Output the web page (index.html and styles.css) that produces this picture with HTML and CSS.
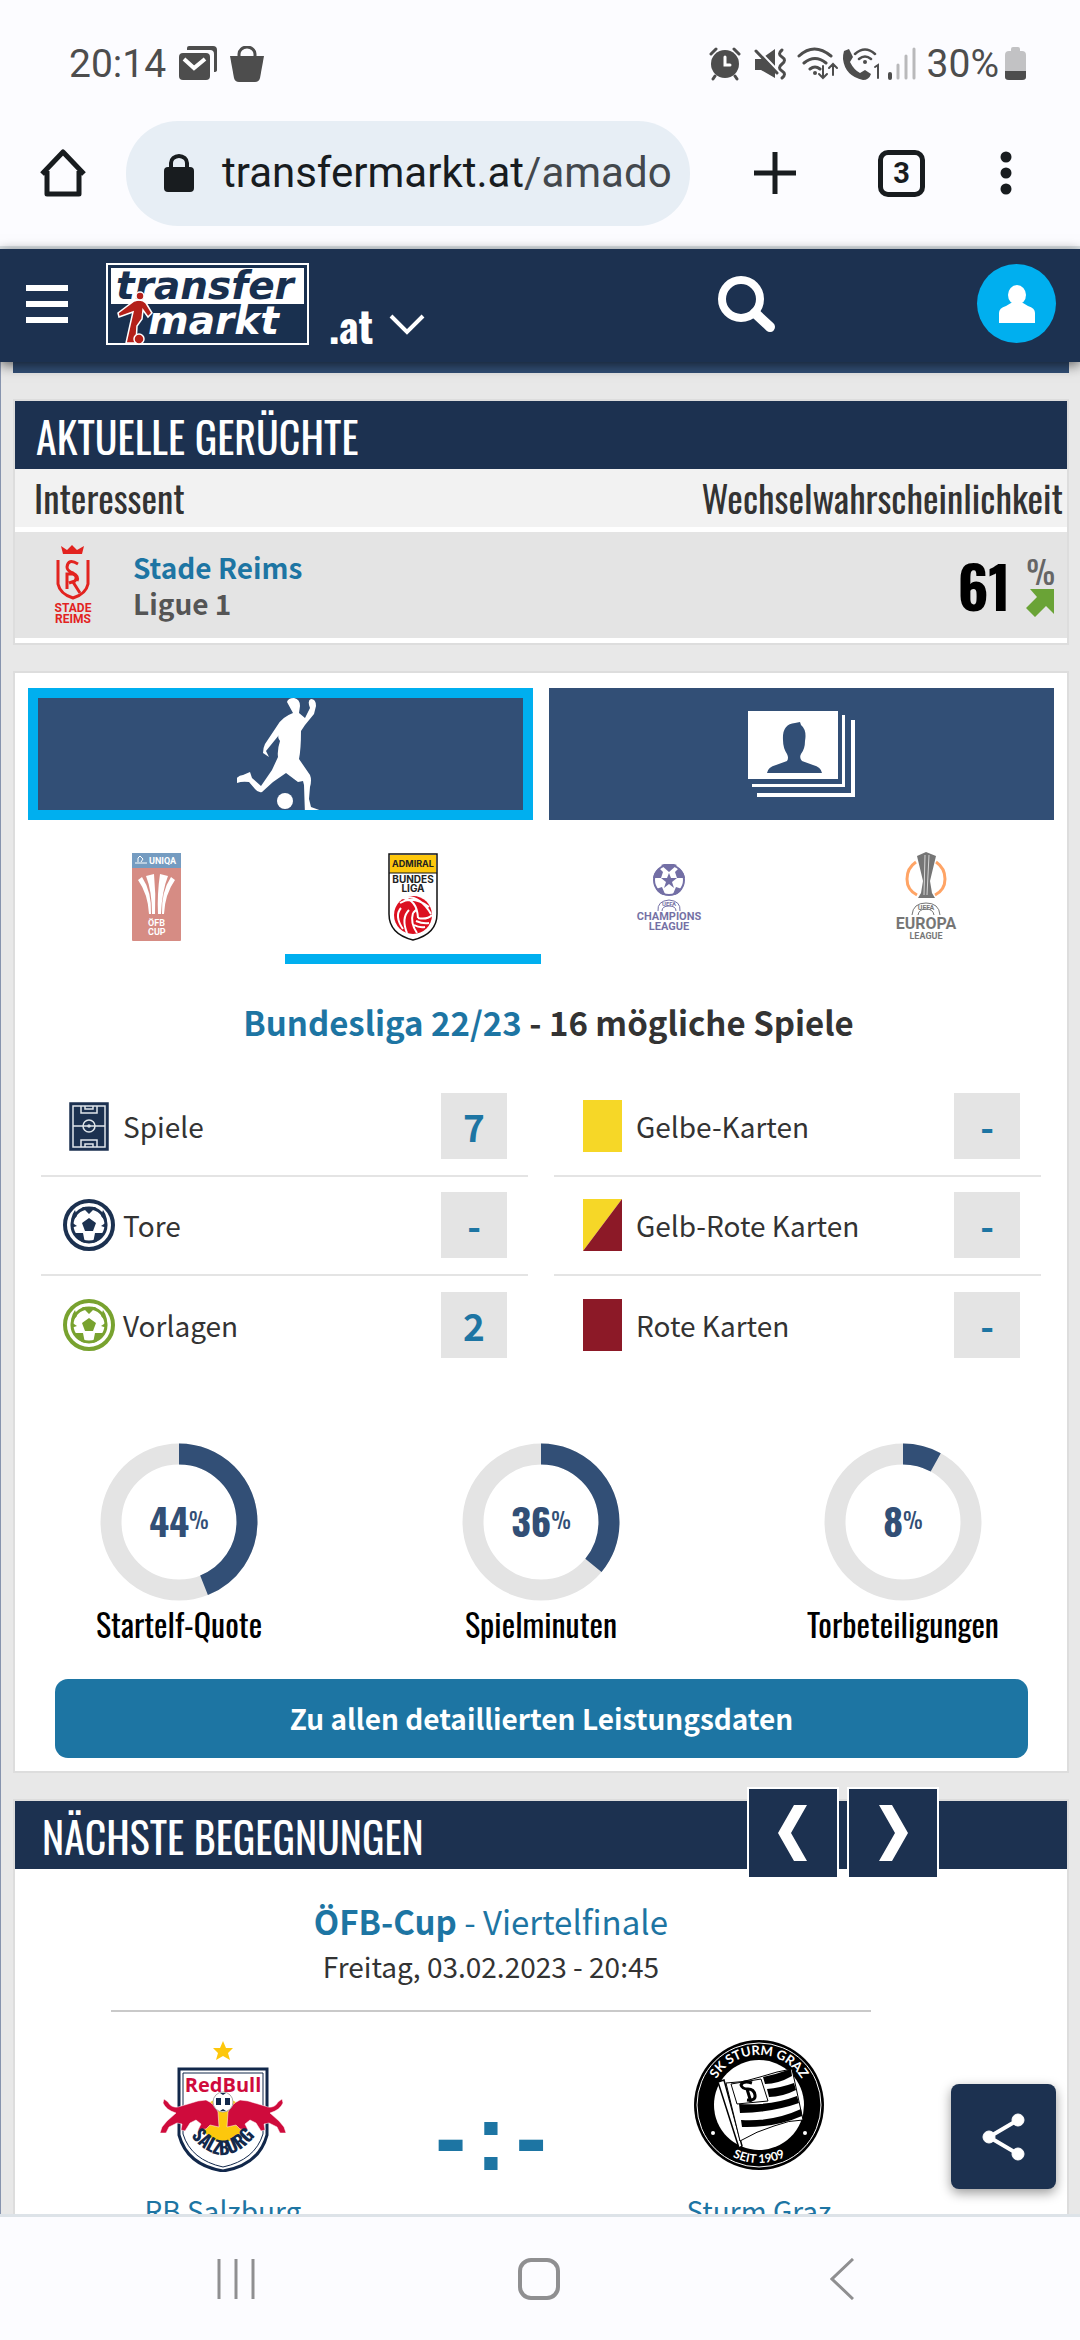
FILE: index.html
```html
<!DOCTYPE html>
<html lang="de">
<head>
  <meta charset="UTF-8">
  <meta name="viewport" content="width=device-width, initial-scale=1.0">
  <title>Transfermarkt</title>
  <link rel="stylesheet" href="styles.css">
</head>
<body>
  <!-- status bar -->
  <div class="statusbar">
    <div class="status-left">
      <span>20:14</span>
      <svg width="38" height="36" viewBox="0 0 38 36"><path d="M8 4V2q0-2 2-2h24q4 0 4 4v20q0 2-3 2V8q0-4-4-4z" fill="#4d4d4d"/><rect y="7" width="31" height="27" rx="4" fill="#4d4d4d"/><path d="M5 13l10 9 11-9" fill="none" stroke="#fff" stroke-width="4"/></svg>
      <svg width="34" height="36" viewBox="0 0 34 36"><path d="M9 12V8a8 7 0 0 1 16 0v4" fill="none" stroke="#4d4d4d" stroke-width="3"/><path d="M0 10h34l-4 22q-1 4-5 4H9q-4 0-5-4z" fill="#4d4d4d"/></svg>
    </div>
    <div class="status-right">
      <svg width="212" height="34" viewBox="0 0 212 34" fill="none" stroke="#4d4d4d" stroke-width="3" stroke-linecap="round">
        <circle cx="16" cy="17" r="14" fill="#4d4d4d" stroke="none"/>
        <path d="M2 7l5-5M25 2l5 5M6 29l-2 3M26 29l2 3"/>
        <path d="M16 10v8h5" stroke="#fff"/>
        <path d="M46 12h6l14-10v29L52 23h-6z" fill="#4d4d4d" stroke="none"/>
        <path d="M48 3l21 22" stroke="#fcfcff" stroke-width="4"/>
        <path d="M47 4l21 22"/>
        <path d="M73 3q-5 4 0 7t0 7 0 7 0 7"/>
        <path d="M90 9q15-14 32 0M95 16q11-9 22 0M101 22q5-4 10 0"/>
        <circle cx="106" cy="26" r="2" fill="#4d4d4d" stroke="none"/>
        <path d="M114 19v12M110 27l4 4 4-4M124 28V18M120 21l4-4 4 4" stroke-width="2"/>
        <path d="M135 4l5-2 4 8-3 5q4 8 10 11l5-3 6 4q-2 6-8 6-18-4-20-21 0-5 1-8z" fill="#4d4d4d" stroke="none"/>
        <path d="M146 7q10-9 20 0M150 12q6-5 12 0" stroke-width="2.500"/>
        <circle cx="156" cy="15" r="2" fill="#4d4d4d" stroke="none"/>
        <path d="M166 20l3-2v13" stroke-width="2"/>
        <path d="M181 27v4" stroke-width="4"/>
        <path d="M189 18v13M197 9v22M205 2v29" stroke="#b9b9bb"/>
      </svg>
      <span>30%</span>
      <svg width="21" height="34" viewBox="0 0 21 34"><path d="M6 4V2q0-2 2-2h5q2 0 2 2v2h2q4 0 4 4v22q0 3-4 3H4q-4 0-4-3V8q0-4 4-4z" fill="#c2c2c4"/><path d="M0 24h21v6q0 3-4 3H4q-4 0-4-3z" fill="#4d4d4d"/></svg>
    </div>
  </div>

  <!-- browser toolbar -->
  <div class="toolbar">
    <button class="tool-btn" aria-label="Startseite">
      <svg width="48" height="50" viewBox="0 0 48 50" fill="none" stroke="#181c1f" stroke-width="5"><path d="M3 26L24 4l21 22M8 23v23h32V23" stroke-linejoin="round"/></svg>
    </button>
    <div class="url">
      <svg width="30" height="38" viewBox="0 0 30 38"><rect y="13" width="30" height="25" rx="4" fill="#181c1f"/><path d="M7 14V9a8 7 0 0 1 16 0v5" fill="none" stroke="#181c1f" stroke-width="4"/></svg>
      <span>transfermarkt.at<span class="path">/amado</span></span>
    </div>
    <button class="tool-btn plus" aria-label="Neuer Tab">
      <svg width="42" height="42" viewBox="0 0 42 42" stroke="#181c1f" stroke-width="5"><path d="M0 21h42M21 0v42"/></svg>
    </button>
    <button class="tabs-btn">3</button>
    <button class="tool-btn dots" aria-label="Menü">
      <svg width="12" height="44" viewBox="0 0 12 44" fill="#181c1f"><circle cx="6" cy="6" r="5.500"/><circle cx="6" cy="22" r="5.500"/><circle cx="6" cy="38" r="5.500"/></svg>
    </button>
  </div>

  <!-- page header -->
  <header class="header">
    <button class="burger" aria-label="Navigation"><i></i><i></i><i></i></button>
    <a class="logo" href="#">
      <svg width="203" height="82" viewBox="0 0 203 82">
        <rect x="1" y="1" width="201" height="80" fill="#19304f" stroke="#fff" stroke-width="2"/>
        <rect x="5" y="5" width="193" height="36" fill="#fff"/>
        <text x="10" y="36" font-family="DejaVu Sans" font-weight="bold" font-style="italic" font-size="39" fill="#19304f">transfer</text>
        <text x="42" y="71" font-family="DejaVu Sans" font-weight="bold" font-style="italic" font-size="39" fill="#fff">markt</text>
        <g fill="#b42019" stroke="#fff" stroke-width="1.500"><path d="M28 38q8-3 12 2l6 10-4 4-5-7-1 9-5 7-1 17h-10l4-18 3-13-14 5-1-4z"/><circle cx="34" cy="33" r="4"/><circle cx="33" cy="76" r="5"/></g>
      </svg>
    </a>
    <button class="country">.at
      <svg width="36" height="22" viewBox="0 0 36 22" fill="none" stroke="#fff" stroke-width="4"><path d="M2 2l16 16L34 2"/></svg>
    </button>
    <button class="search" aria-label="Suche">
      <svg width="58" height="56" viewBox="0 0 58 56" fill="none" stroke="#fff"><circle cx="24" cy="23" r="19" stroke-width="8"/><path d="M38 37l15 14" stroke-width="10" stroke-linecap="round"/></svg>
    </button>
    <a class="user" href="#" aria-label="Profil">
      <svg width="36" height="38" viewBox="0 0 36 38" fill="#fff"><ellipse cx="18" cy="10" rx="9" ry="10"/><path d="M0 38V28q0-5 7-7l5-3h12l5 3q7 2 7 7v10z"/></svg>
    </a>
  </header>

  <main class="page">
    <div class="strip"></div>

    <section class="box">
      <h2 class="head">AKTUELLE GERÜCHTE</h2>
      <table class="rumours">
        <tr><th>Interessent</th><th class="right">Wechselwahrscheinlichkeit</th></tr>
        <tr class="line">
          <td>
            <div class="club">
              <svg width="42" height="80" viewBox="0 0 42 80" fill="none" stroke="#e2231f">
                <path d="M11 9L9 1l6 4 5-5 5 5 7-4-2 8z" fill="#e2231f" stroke="none"/>
                <path d="M6 15v24q2 10 15 14 13-4 15-14V15" stroke-width="3"/>
                <path d="M26 19q-10-6-11 3 0 4 6 6 6 3 4 8M15 44V29h6q5 2 2 7l-6 2M21 37l7 11" stroke-width="3"/>
                <g fill="#e2231f" stroke="none" font-family="Roboto" font-size="12" text-anchor="middle"><text x="21" y="67">STADE</text><text x="21" y="78" font-weight="bold">REIMS</text></g>
              </svg>
              <div><a href="#">Stade Reims</a><br>Ligue 1</div>
            </div>
          </td>
          <td>
            <div class="chance">
              <b>61</b>
              <div class="trend">%<svg width="28" height="28" viewBox="0 0 28 28"><path d="M4 0h24v25l-8-8-11 11-9-9 11-11z" fill="#6aa336"/></svg></div>
            </div>
          </td>
        </tr>
      </table>
    </section>

    <section class="box">
      <div class="tiles">
        <button class="tile active" aria-label="Leistungsdaten">
          <svg width="88" height="112" viewBox="0 0 88 112" fill="#fff"><path d="M50 4q1-4 7-4 6 1 6 8l-1 7 6 5 5-10q-3-8 1-9 5 0 5 7l-2 8-9 11-4 6q0 18-2 28l11 16q2 5 0 12l-1 12 2 8 11 4q3 1 2 4H68l-1-30-1-4-5 1-12-9-13 9-11 10q-4 1-7-3l-6-7q-7-1-12 1l-1-4q3-4 7-4l7-3 2 6 9 8 11-16 6-13q-1-7 2-16-3-4-1-6l-13 16 3 6-6-4q0-5 2-9l12-18q5-9 16-13z"/><circle cx="48" cy="103" r="8"/></svg>
        </button>
        <button class="tile" aria-label="Kader">
          <svg width="108" height="86" viewBox="0 0 108 86" fill="#fff"><path d="M0 0h90v68H0zM94 4h3v72H4v-3h90zM103 9h4v77H9v-4h94z"/><path d="M19 62q1-6 9-8l11-4q2-3 0-7-4-6-4-14-1-16 12-17l5-1 1 3q6 5 4 16 0 8-4 13-2 4 1 7l11 4q8 2 9 8z" fill="#324f76"/></svg>
        </button>
      </div>

      <nav class="comps">
        <a class="faded" href="#" aria-label="ÖFB-Cup">
          <svg width="49" height="88" viewBox="0 0 49 88"><rect width="49" height="88" rx="1" fill="#bb4034"/><rect width="49" height="15" fill="#1a5c98"/><path d="M3 10h12M6 9q-1-5 2-6l3 3-2 3" stroke="#fff" fill="none"/><g fill="#fff" font-family="Roboto" font-weight="bold" font-size="9"><text x="17" y="11">UNIQA</text><text x="16" y="73">ÖFB</text><text x="16" y="82">CUP</text></g><path d="M6 27l4-3q10 15 9 37h-2Q16 41 6 27zM14 23l8-2q2 20 1 40h-3q0-23-6-38zM28 21l8 2q-6 15-7 38h-3q-1-20 2-40zM39 24l4 3Q33 41 32 61h-2q-1-22 9-37z" fill="#fff"/></svg>
        </a>
        <a class="current" href="#" aria-label="Bundesliga">
          <svg width="50" height="88" viewBox="0 0 50 88"><path d="M1 1h48v60q0 20-24 26Q1 81 1 61z" fill="#fff" stroke="#111" stroke-width="1.500"/><path d="M2 2h46v18H2z" fill="#fdc70c"/><path d="M1 20h48" stroke="#111"/><g fill="#222" font-family="Inter" font-weight="bold" text-anchor="middle"><text x="25" y="14" font-size="9">ADMIRAL</text><text x="25" y="30" font-size="10">BUNDES</text><text x="25" y="39" font-size="10">LIGA</text></g><circle cx="25" cy="62" r="19" fill="#dc1020"/><path d="M12 50q13-8 29 4M14 45q15 1 16 20M17 44q16-1 26 17M30 65q9 2 14-3M28 68q7 3 13 2M26 72q5 3 11 2M21 57q-8 8-2 23M13 55q-7 8 2 21M25 60l3-3M25 60q-3 10 4 20" stroke="#fff" stroke-width="2" fill="none"/></svg>
        </a>
        <a class="faded" href="#" aria-label="Champions League">
          <svg width="70" height="68" viewBox="0 0 70 68" fill="#17116b"><circle cx="35" cy="17" r="15" fill="none" stroke="#17116b" stroke-width="2"/><path d="M35 10l2 5h6l-5 4 2 6-5-4-5 4 2-6-5-4h6zM27 2l8 7 8-7-3-1H30zM19 15l8 0 2-6-4-4q-5 4-6 10zM51 15l-8 0-2-6 4-4q5 4 6 10zM22 26l6-2 3 7-2 1q-5-2-7-6zM48 26l-6-2-3 7 2 1q5-2 7-6z"/><path d="M24 48q-1-10 11-11 12 1 11 11M28 48q0-5 7-5t7 5" fill="none" stroke="#17116b"/><g font-family="Roboto" font-weight="bold" text-anchor="middle"><text x="35" y="43" font-size="6">UEFA</text><text x="35" y="57" font-size="11">CHAMPIONS</text><text x="35" y="67" font-size="11">LEAGUE</text></g></svg>
        </a>
        <a class="faded" href="#" aria-label="Europa League">
          <svg width="64" height="90" viewBox="0 0 64 90" fill="#1b1b1b"><path d="M22 10q-9 6-9 17t10 16M42 10q9 6 9 17T41 43" fill="none" stroke="#ff6900" stroke-width="3"/><path d="M23 4l9-4 10 4-6 25 2 12 3 5H24l3-5 2-12z"/><path d="M31 3l-1 40M35 3l-2 40" stroke="#bbb"/><path d="M18 63q1-12 14-12t14 12M24 63q1-6 8-6t8 6" fill="none" stroke="#1b1b1b"/><g font-family="Roboto" font-weight="bold" text-anchor="middle"><text x="32" y="58" font-size="7">UEFA</text><text x="32" y="77" font-size="16">EUROPA</text><text x="32" y="87" font-size="9">LEAGUE</text></g></svg>
        </a>
      </nav>

      <h3 class="season"><a href="#">Bundesliga 22/23</a> - 16 mögliche Spiele</h3>

      <div class="stats">
        <dl>
          <div class="stat">
            <dt><svg width="54" height="54" viewBox="0 0 54 54" fill="none" stroke="#dfe5ea" stroke-width="1.500"><rect x="8" y="4" width="38" height="47" fill="#1c3150" stroke="#1c3150"/><rect x="11" y="7" width="32" height="41"/><path d="M11 27h32M19 7v7h16V7M19 48v-7h16v7M23 7v3h8V7M23 48v-3h8v3"/><circle cx="27" cy="27" r="6"/><circle cx="27" cy="27" r="1"/></svg>Spiele</dt>
            <dd>7</dd>
          </div>
          <div class="stat">
            <dt><svg class="ball" width="54" height="54" viewBox="0 0 54 54"><circle cx="27" cy="27" r="24" fill="#fff" stroke="currentColor" stroke-width="4"/><circle cx="27" cy="27" r="17" fill="#fff" stroke="currentColor" stroke-width="3"/><path d="M27 20l7 5-3 8h-8l-3-8zM20 9h14l-7 7zM9 24l6-6-2-6Q8 19 9 30l6-2zM45 24l-6-6 2-6q5 7 4 18l-6-2zM13 35h8l2 10q-7-2-10-10zM41 35h-8l-2 10q7-2 10-10z" fill="currentColor"/></svg>Tore</dt>
            <dd>-</dd>
          </div>
          <div class="stat">
            <dt><svg class="ball green" width="54" height="54" viewBox="0 0 54 54"><circle cx="27" cy="27" r="24" fill="#fff" stroke="currentColor" stroke-width="4"/><circle cx="27" cy="27" r="17" fill="#fff" stroke="currentColor" stroke-width="3"/><path d="M27 20l7 5-3 8h-8l-3-8zM20 9h14l-7 7zM9 24l6-6-2-6Q8 19 9 30l6-2zM45 24l-6-6 2-6q5 7 4 18l-6-2zM13 35h8l2 10q-7-2-10-10zM41 35h-8l-2 10q7-2 10-10z" fill="currentColor"/></svg>Vorlagen</dt>
            <dd>2</dd>
          </div>
        </dl>
        <dl>
          <div class="stat">
            <dt><svg width="54" height="54" viewBox="0 0 54 54"><rect x="8" y="1" width="39" height="52" fill="#f6d727"/></svg>Gelbe-Karten</dt>
            <dd>-</dd>
          </div>
          <div class="stat">
            <dt><svg width="54" height="54" viewBox="0 0 54 54"><path d="M8 1h39L8 53z" fill="#f6d727"/><path d="M47 1v52H8z" fill="#8c1927"/></svg>Gelb-Rote Karten</dt>
            <dd>-</dd>
          </div>
          <div class="stat">
            <dt><svg width="54" height="54" viewBox="0 0 54 54"><rect x="8" y="1" width="39" height="52" fill="#8c1927"/></svg>Rote Karten</dt>
            <dd>-</dd>
          </div>
        </dl>
      </div>

      <div class="quotes">
        <div class="quote">
          <div class="ring">
            <svg viewBox="0 0 158 158"><circle cx="79" cy="79" r="68"/><circle class="val" cx="79" cy="79" r="68" pathLength="100" stroke-dasharray="44 100"/></svg>
            <p><b>44</b><span>%</span></p>
          </div>
          Startelf-Quote
        </div>
        <div class="quote">
          <div class="ring">
            <svg viewBox="0 0 158 158"><circle cx="79" cy="79" r="68"/><circle class="val" cx="79" cy="79" r="68" pathLength="100" stroke-dasharray="36 100"/></svg>
            <p><b>36</b><span>%</span></p>
          </div>
          Spielminuten
        </div>
        <div class="quote">
          <div class="ring">
            <svg viewBox="0 0 158 158"><circle cx="79" cy="79" r="68"/><circle class="val" cx="79" cy="79" r="68" pathLength="100" stroke-dasharray="8 100"/></svg>
            <p><b>8</b><span>%</span></p>
          </div>
          Torbeteiligungen
        </div>
      </div>

      <a class="more" href="#">Zu allen detaillierten Leistungsdaten</a>
    </section>

    <section class="box">
      <h2 class="head next">NÄCHSTE BEGEGNUNGEN</h2>
      <div class="arrows">
        <button aria-label="Zurück"><svg width="30" height="56" viewBox="0 0 30 56" fill="#fff"><path d="M16 0h13L13 28l16 28H16L0 28z"/></svg></button>
        <button aria-label="Weiter"><svg width="30" height="56" viewBox="0 0 30 56" fill="#fff"><path d="M14 0H1l16 28L1 56h13l16-28z"/></svg></button>
      </div>
      <div class="match">
        <p class="round"><a href="#"><b>ÖFB-Cup</b> - Viertelfinale</a></p>
        <p class="date">Freitag, 03.02.2023 - 20:45</p>
        <hr>
        <div class="teams">
          <div class="team">
            <svg width="132" height="134" viewBox="0 0 132 134">
              <path d="M66 3l3 7h7l-5 5 2 7-7-4-7 4 2-7-5-5h7z" fill="#fdc70c"/>
              <path d="M22 31h88v66q-8 30-44 36-36-6-44-36z" fill="#fff" stroke="#12284b" stroke-width="3"/>
              <path d="M26 35h80v61q-8 26-40 33-32-7-40-33z" fill="#fff" stroke="#12284b"/>
              <circle cx="66" cy="82" r="22" fill="#fdc70c"/>
              <path id="rbull" d="M62 89l-9-2-4 4-8 1 3-6-5-4-6 3-5 8-4-1 1-6-5-1-8 4-3 6h-6l2-6 5-6 9-8q-10-3-13-10l1-4 4 3q3 6 10 5l20-6 8-1q9 4 12 12z" fill="#cf0b3c" stroke="#fff" stroke-width=".5"/>
              <use href="#rbull" transform="translate(132 0) scale(-1 1)"/>
              <text x="66" y="54" font-family="Open Sans" font-weight="bold" font-size="20" text-anchor="middle" fill="#cf0b3c">RedBull</text>
              <circle cx="66" cy="64" r="10" fill="#fff" stroke="#aaa"/><path d="M59 60h5v7h-5zM68 60h5v7h-5zM63 55h6l-3 2zM63 73l3-2 3 2z" fill="#12284b"/>
              <path id="rbarc" d="M29 92Q66 142 103 92" fill="none"/>
              <text font-family="Oswald" font-weight="bold" font-size="18" fill="#12284b" text-anchor="middle"><textPath href="#rbarc" startOffset="50%">SALZBURG</textPath></text>
            </svg>
            <a href="#">RB Salzburg</a>
          </div>
          <div class="score"><span>-</span><span>:</span><span>-</span></div>
          <div class="team">
            <svg width="132" height="134" viewBox="0 0 132 134">
              <circle cx="66" cy="67" r="65" fill="#000"/><circle cx="66" cy="67" r="62" fill="none" stroke="#fff"/><circle cx="66" cy="67" r="45" fill="#fff"/>
              <path d="M25 44l6-2 18 66-3 2z" fill="#fff" stroke="#000" stroke-width="1.500"/>
              <path d="M33 45q18 0 34-6 18-6 32-8l11 51q-14 0-29 6-17 5-34 15z" fill="#fff" stroke="#000"/>
              <path d="M70 39q14-3 28-8l1 7q-14 8-27 8zM74 51q13-1 27-6l2 7q-14 7-27 7zM46 66q32 2 58-8l2 7q-25 9-59 10zM48 82q32 2 60-11l1 7q-28 12-60 11z"/>
              <path d="M38 46l30-5 7 22-31 3z" fill="#fff" stroke="#000"/><path d="M59 45q-9-3-11 2 1 4 7 4t7 6-8 5M54 51l4 13" fill="none" stroke="#000" stroke-width="3"/>
              <path id="sktop" d="M16 67a50 50 0 0 1 100 0" fill="none"/><path id="skbot" d="M8 67a58 58 0 0 0 116 0" fill="none"/>
              <g fill="#fff" font-family="Lato" font-weight="bold" text-anchor="middle"><text font-size="13"><textPath href="#sktop" startOffset="50%">SK STURM GRAZ</textPath></text><text font-size="12"><textPath href="#skbot" startOffset="50%">SEIT 1909</textPath></text></g>
              <circle cx="20" cy="95" r="2" fill="#fff"/><circle cx="112" cy="95" r="2" fill="#fff"/>
            </svg>
            <a href="#">Sturm Graz</a>
          </div>
        </div>
      </div>
    </section>

    <button class="share" aria-label="Teilen">
      <svg width="44" height="50" viewBox="0 0 44 50" fill="#fff" stroke="#fff"><circle cx="7" cy="25" r="6"/><circle cx="36" cy="8" r="6"/><circle cx="36" cy="42" r="6"/><path d="M36 8L7 25l29 17" fill="none" stroke-width="4"/></svg>
    </button>
  </main>

  <!-- system navigation -->
  <nav class="sysnav">
    <button aria-label="Letzte Apps"><svg width="40" height="42" viewBox="0 0 40 42" stroke="#8f8f91" stroke-width="3"><path d="M3 1v40M20 1v40M37 1v40"/></svg></button>
    <button aria-label="Home"><svg width="42" height="42" viewBox="0 0 42 42" fill="none" stroke="#8f8f91" stroke-width="4"><rect x="2" y="2" width="38" height="38" rx="11"/></svg></button>
    <button aria-label="Zurück"><svg width="24" height="42" viewBox="0 0 24 42" fill="none" stroke="#8f8f91" stroke-width="3"><path d="M23 1L2 21l21 20"/></svg></button>
  </nav>
</body>
</html>
```
FILE: styles.css
```css
* {
  margin: 0;
  padding: 0;
  box-sizing: border-box;
}
body {
  display: flex;
  flex-direction: column;
  height: 100vh;
  background-color: #fcfcff;
  font: 28px/36px "Source Sans Pro", "Noto Sans CJK SC", sans-serif;
  color: #333;
}
a {
  color: #1d75a3;
  text-decoration: none;
}
button {
  border: 0;
  background: none;
  font: inherit;
  color: inherit;
}
svg {
  display: block;
  flex: none;
}

/* status bar */
.statusbar {
  display: flex;
  justify-content: space-between;
  align-items: center;
  height: 120px;
  padding: 8px 54px 0 69px;
  font: 39px/44px Roboto, sans-serif;
  color: #4d4d4d;
}
.status-left,
.status-right {
  display: flex;
  align-items: center;
  gap: 13px;
}
.status-right {
  gap: 6px;
}

/* browser toolbar */
.toolbar {
  display: flex;
  align-items: center;
  height: 129px;
  padding: 0 68px 20px 39px;
  border-bottom: 3px solid #dfe5e9;
}
.url {
  display: flex;
  align-items: center;
  flex: 1;
  gap: 28px;
  height: 105px;
  margin: 0 64px 0 39px;
  padding-left: 38px;
  border-radius: 52px;
  background-color: #e7eef5;
  font: 42px/48px Roboto, sans-serif;
  color: #181c1f;
  white-space: nowrap;
  overflow: hidden;
}
.url .path {
  color: #43484d;
}
.tabs-btn {
  width: 47px;
  height: 47px;
  margin: 0 75px 0 82px;
  border: 5px solid #181c1f;
  border-radius: 10px;
  font: bold 29px/36px Roboto, sans-serif;
  color: #181c1f;
}

/* page header */
.header {
  position: relative;
  z-index: 2;
  display: flex;
  align-items: center;
  height: 113px;
  flex: none;
  padding: 0 24px 4px 26px;
  background-color: #1c3150;
  box-shadow: 0 3px 12px rgba(0,0,0,0.6);
}
.burger {
  display: grid;
  gap: 10px;
  width: 42px;
}
.burger i {
  height: 6px;
  background-color: #fff;
}
.logo {
  margin: 0 20px 0 38px;
}
.country {
  display: flex;
  align-items: center;
  gap: 16px;
  padding-top: 42px;
  font: bold 42px/44px "Oswald", "Roboto Condensed", "Liberation Sans Narrow", sans-serif;
  color: #fff;
}
.search {
  margin-left: auto;
}
.user {
  display: grid;
  place-items: center;
  width: 79px;
  height: 79px;
  margin-left: 202px;
  border-radius: 50%;
  background-color: #00afef;
}

/* content */
.page {
  position: relative;
  flex: 1;
  min-height: 0;
  padding: 0 11px 0 12px;
  border-left: 1px solid #8794ae;
  background-color: #e8e8e8;
  overflow: hidden;
}
.strip {
  height: 11px;
  background-color: #324f76;
}
.box {
  position: relative;
  margin-top: 26px;
  border: 2px solid #ddd;
  background-color: #fff;
}
.head {
  height: 68px;
  padding-left: 21px;
  background-color: #1c3150;
  font: 42px/70px "Oswald", "Roboto Condensed", "Liberation Sans Narrow", sans-serif;
  color: #fff;
}
.head.next {
  padding-left: 27px;
}

/* rumours */
.rumours {
  width: 100%;
  margin-bottom: 5px;
  border-collapse: collapse;
}
.rumours th {
  height: 58px;
  padding: 0 6px 0 19px;
  background-color: #f2f2f2;
  font: 37px/58px "Oswald", "Roboto Condensed", "Liberation Sans Narrow", sans-serif;
  text-align: left;
}
.rumours th.right {
  padding-right: 4px;
  text-align: right;
}
.rumours .line {
  height: 108px;
  border-top: 5px solid #fff;
  background-color: #e4e4e4;
}
.club {
  display: flex;
  align-items: center;
  gap: 39px;
  padding-left: 37px;
  font-weight: bold;
  color: #555;
}
.chance {
  display: flex;
  justify-content: flex-end;
  align-items: center;
  gap: 16px;
  padding-right: 12px;
}
.chance b {
  font: bold 58px/64px "Oswald", "Roboto Condensed", "Liberation Sans Narrow", sans-serif;
  color: #000;
}
.trend {
  font: 32px/36px "Oswald", "Roboto Condensed", "Liberation Sans Narrow", sans-serif;
  color: #666;
}

/* performance */
.tiles {
  display: grid;
  grid-template-columns: 1fr 1fr;
  gap: 16px;
  padding: 15px 13px 0;
}
.tile {
  display: grid;
  place-items: center;
  height: 132px;
  background-color: #324f76;
}
.tile.active {
  border: 10px solid #00afef;
}
.comps {
  display: grid;
  grid-template-columns: repeat(4, 1fr);
  padding: 20px 13px 0;
}
.comps a {
  display: grid;
  place-items: center;
  height: 124px;
  border-bottom: 10px solid transparent;
}
.comps .current {
  border-color: #00afef;
}
.comps .faded svg {
  opacity: 0.6;
}
.season {
  padding: 36px 0 0 15px;
  font-size: 33px;
  line-height: 44px;
  text-align: center;
}
.stats {
  display: grid;
  grid-template-columns: 1fr 1fr;
  gap: 26px;
  padding: 34px 26px 0;
}
.stat {
  display: flex;
  justify-content: space-between;
  align-items: center;
  height: 99px;
  padding: 0 21px;
  border-bottom: 2px solid #e4e4e4;
}
.stat:last-child {
  border-bottom: 0;
}
.stat dt {
  display: flex;
  align-items: center;
  gap: 7px;
}
.stat dd {
  width: 66px;
  height: 66px;
  background-color: #e4e4e4;
  font-weight: bold;
  font-size: 37px;
  line-height: 66px;
  text-align: center;
  color: #1d75a3;
}
.ball {
  color: #1c3150;
}
.ball.green {
  color: #78a22f;
}
.quotes {
  display: grid;
  grid-template-columns: repeat(3, 1fr);
  justify-items: center;
  margin: 68px -17px 0;
}
.quote {
  font: 32px/46px "Oswald", "Roboto Condensed", "Liberation Sans Narrow", sans-serif;
  text-align: center;
  color: #000;
}
.ring {
  display: grid;
  place-items: center;
}
.ring svg,
.ring p {
  grid-area: 1 / 1;
}
.ring svg {
  width: 158px;
  transform: rotate(-90deg);
  fill: none;
  stroke: #e4e4e4;
  stroke-width: 21;
}
.ring .val {
  stroke: #324f76;
}
.ring p {
  color: #324f76;
}
.ring b {
  font-size: 38px;
}
.ring span {
  font-size: 22px;
  line-height: 22px;
  vertical-align: 8px;
}
.more {
  display: block;
  margin: 32px 39px 13px 40px;
  border-radius: 13px;
  background-color: #1d75a3;
  font-weight: bold;
  line-height: 79px;
  text-align: center;
  color: #fff;
}

/* next matches */
.arrows {
  position: absolute;
  top: -14px;
  right: 128px;
  display: flex;
  gap: 8px;
}
.arrows button {
  display: grid;
  place-items: center;
  width: 92px;
  height: 92px;
  border: 2px solid #fff;
  background-color: #1c3150;
}
.match {
  width: 90%;
  padding: 28px 0 0 5px;
  text-align: center;
}
.round {
  font-size: 33px;
  line-height: 48px;
}
.date {
  line-height: 42px;
}
.match hr {
  margin: 23px 91px 26px;
  border: 0;
  border-top: 2px solid #c9c9c9;
}
.teams {
  display: flex;
  justify-content: center;
  gap: 48px;
}
.team {
  display: grid;
  justify-items: center;
  align-content: start;
  gap: 20px;
  width: 200px;
}
.score {
  display: flex;
  justify-content: center;
  gap: 9px;
  width: 240px;
  padding-top: 50px;
  font: bold 94px/100px "Liberation Sans", sans-serif;
  color: #1d75a3;
}
.share {
  position: absolute;
  right: 24px;
  bottom: 25px;
  display: grid;
  place-items: center;
  width: 105px;
  height: 105px;
  border-radius: 8px;
  background-color: #1c3150;
  box-shadow: 0 4px 12px rgba(0,0,0,0.4);
}

/* system navigation */
.sysnav {
  display: flex;
  justify-content: space-between;
  height: 126px;
  flex: none;
  padding: 0 217px 0 215px;
  border-top: 3px solid #dde3e8;
}
.sysnav button {
  display: grid;
  place-items: center;
  width: 42px;
}
```
